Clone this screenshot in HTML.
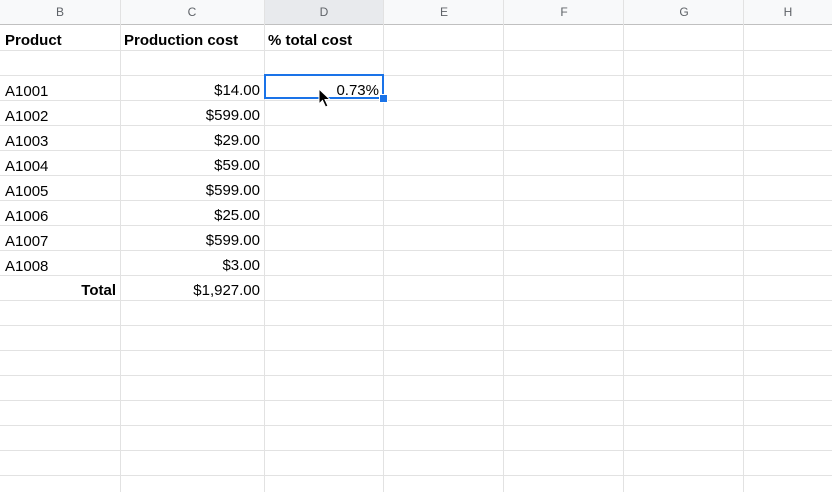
<!DOCTYPE html>
<html><head><style>
body{margin:0;width:832px;height:492px;overflow:hidden;background:#fff;font-family:"Liberation Sans",Arial,sans-serif;position:relative}
.h{position:absolute;top:0;height:25px;background:#f8f9fa;border-bottom:1px solid #c0c0c0;color:#5f6368;font-size:12px;text-align:center;line-height:25px;box-sizing:border-box}
.v{position:absolute;top:0;width:1px;height:492px;background:#e2e2e2}
.r{position:absolute;left:0;width:832px;height:1px;background:#e2e2e2}
.t{position:absolute;font-size:15px;color:#000;line-height:25px;height:25px;margin-top:2px}
.b{font-weight:bold}
.rt{text-align:right}
</style></head><body>
<div class="h" style="left:0;width:120px">B</div>
<div class="h" style="left:120px;width:144px">C</div>
<div class="h" style="left:264px;width:120px;background:#e8eaed">D</div>
<div class="h" style="left:384px;width:120px">E</div>
<div class="h" style="left:504px;width:120px">F</div>
<div class="h" style="left:624px;width:120px">G</div>
<div class="h" style="left:744px;width:88px">H</div>
<div class="v" style="left:120px"></div>
<div class="v" style="left:264px"></div>
<div class="v" style="left:383px"></div>
<div class="v" style="left:503px"></div>
<div class="v" style="left:623px"></div>
<div class="v" style="left:743px"></div>
<div class="r" style="top:50px"></div><div class="r" style="top:75px"></div><div class="r" style="top:100px"></div><div class="r" style="top:125px"></div><div class="r" style="top:150px"></div><div class="r" style="top:175px"></div><div class="r" style="top:200px"></div><div class="r" style="top:225px"></div><div class="r" style="top:250px"></div><div class="r" style="top:275px"></div><div class="r" style="top:300px"></div><div class="r" style="top:325px"></div><div class="r" style="top:350px"></div><div class="r" style="top:375px"></div><div class="r" style="top:400px"></div><div class="r" style="top:425px"></div><div class="r" style="top:450px"></div><div class="r" style="top:475px"></div>
<div class="t b" style="left:5px;top:26px">Product</div>
<div class="t b" style="left:124px;top:26px">Production cost</div>
<div class="t b" style="left:268px;top:26px">% total cost</div>
<div class="t" style="left:5px;top:77px">A1001</div><div class="t rt" style="left:120px;width:140px;top:76px">$14.00</div>
<div class="t" style="left:5px;top:102px">A1002</div><div class="t rt" style="left:120px;width:140px;top:101px">$599.00</div>
<div class="t" style="left:5px;top:127px">A1003</div><div class="t rt" style="left:120px;width:140px;top:126px">$29.00</div>
<div class="t" style="left:5px;top:152px">A1004</div><div class="t rt" style="left:120px;width:140px;top:151px">$59.00</div>
<div class="t" style="left:5px;top:177px">A1005</div><div class="t rt" style="left:120px;width:140px;top:176px">$599.00</div>
<div class="t" style="left:5px;top:202px">A1006</div><div class="t rt" style="left:120px;width:140px;top:201px">$25.00</div>
<div class="t" style="left:5px;top:227px">A1007</div><div class="t rt" style="left:120px;width:140px;top:226px">$599.00</div>
<div class="t" style="left:5px;top:252px">A1008</div><div class="t rt" style="left:120px;width:140px;top:251px">$3.00</div>
<div class="t b rt" style="left:0;width:116px;top:276px">Total</div><div class="t rt" style="left:120px;width:140px;top:276px">$1,927.00</div>
<div style="position:absolute;left:264px;top:74px;width:120px;height:25px;border:2px solid #1a73e8;box-sizing:border-box"></div>
<div style="position:absolute;left:379px;top:94px;width:9px;height:9px;background:#1a73e8;border:1px solid #fff;box-sizing:border-box"></div>
<div class="t rt" style="left:264px;width:115px;top:76px">0.73%</div>
<svg style="position:absolute;left:318px;top:88px" width="14" height="22" viewBox="0 0 14 22"><path d="M1 1 L1 16 L4.5 12.5 L7.5 19 L10 18 L7 11.5 L12 11.5 Z" fill="#000" stroke="#fff" stroke-width="1"/></svg>
</body></html>
